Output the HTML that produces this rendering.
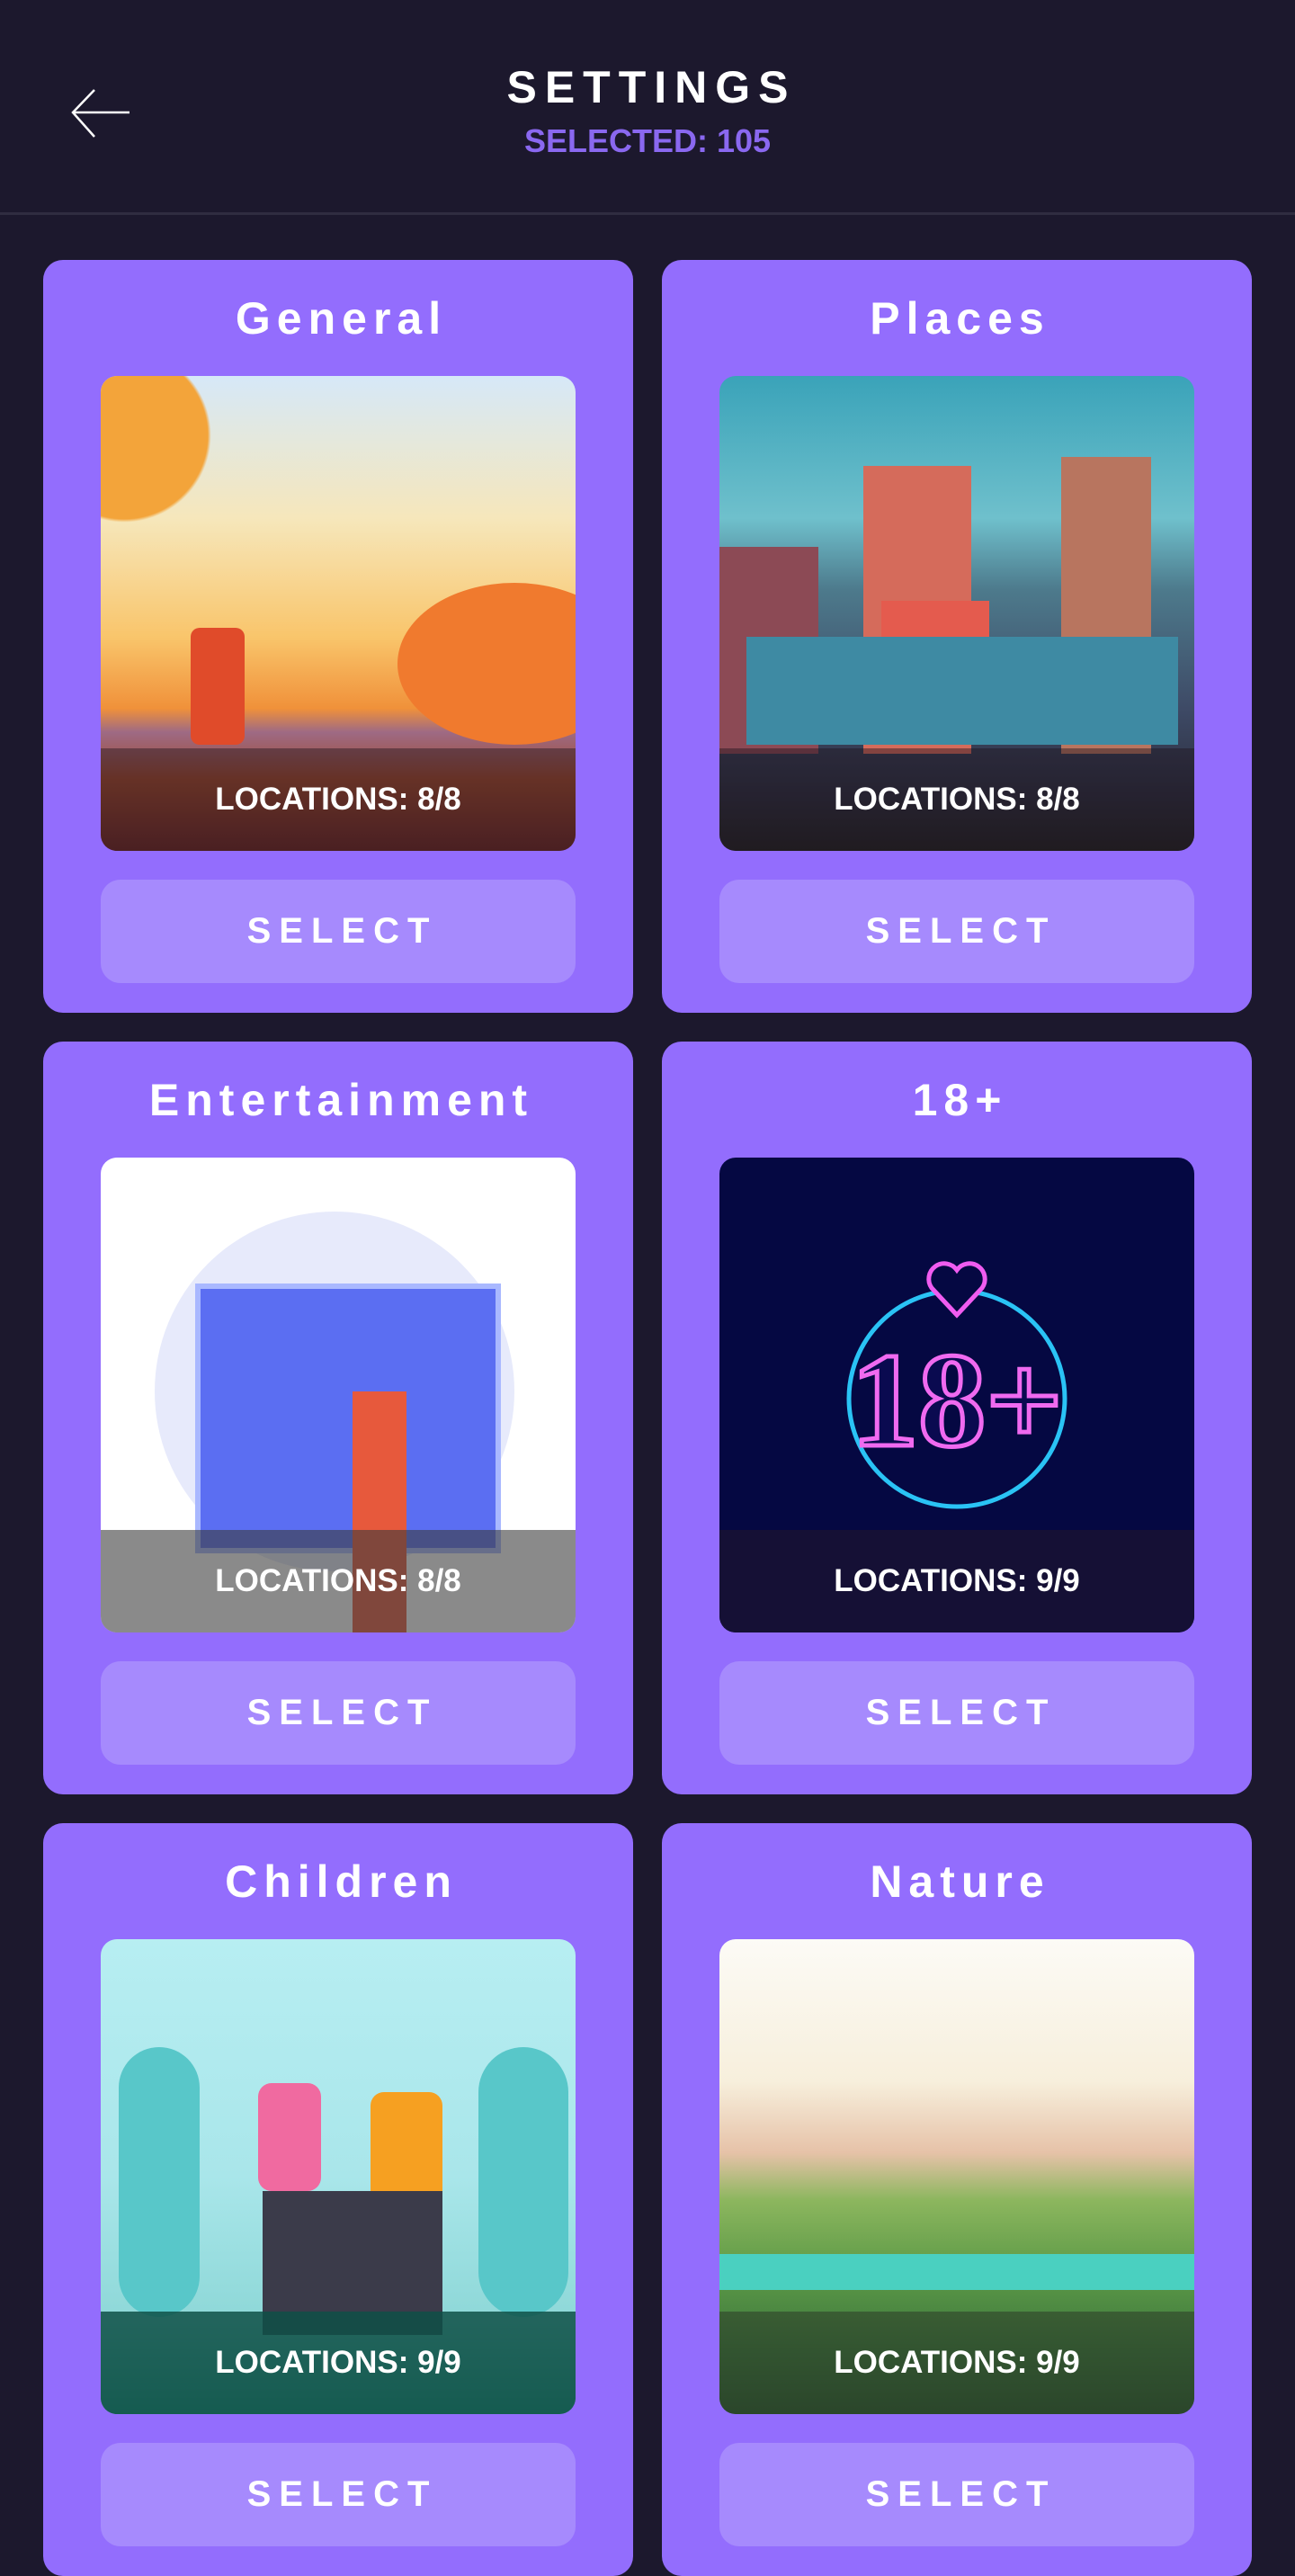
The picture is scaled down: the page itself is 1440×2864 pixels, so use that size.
<!DOCTYPE html>
<html><head><meta charset="utf-8"><style>
*{margin:0;padding:0;box-sizing:border-box}
body{width:1440px;height:2816px;background:#1c182d;overflow:hidden;font-family:"Liberation Sans",sans-serif;position:relative}
.hdr{position:absolute;left:0;top:0;width:1440px;height:239px;border-bottom:3px solid #2f2c40}
.t1{position:absolute;top:68px;width:1440px;text-align:center;color:#fff;font-size:50px;font-weight:bold;letter-spacing:9px;padding-left:9px}
.t2{position:absolute;top:136px;width:1440px;text-align:center;color:#8a68f0;font-size:36px;font-weight:bold}
.card{position:absolute;width:656px;height:837px;background:#936dfd;border-radius:22px}
.ct{position:absolute;top:36px;width:100%;text-align:center;color:#fff;font-size:50px;font-weight:bold;letter-spacing:7px;padding-left:7px}
.img{position:absolute;left:64px;top:129px;width:528px;height:528px;border-radius:18px;overflow:hidden}
.ov{position:absolute;left:0;bottom:0;width:100%;height:114px;background:rgba(30,20,30,.45);color:#fff;font-size:35px;font-weight:bold;text-align:center;line-height:114px}
.btn{position:absolute;left:64px;top:689px;width:528px;height:115px;border-radius:22px;background:#a68afd;color:#fff;font-size:40px;font-weight:bold;letter-spacing:9px;text-align:center;line-height:115px;padding-left:9px}
</style></head><body>
<div class="hdr">
<svg style="position:absolute;left:76px;top:96px" width="72" height="60" viewBox="0 0 72 60"><path d="M5 29H68M29 4L5 29L29 56" stroke="#fff" stroke-width="2.5" fill="none"/></svg>
<div class="t1">SETTINGS</div><div class="t2">SELECTED: 105</div>
</div>

<div class="card" style="left:48px;top:289px"><div class="ct">General</div>
<div class="img" style="background:linear-gradient(#d6e8f8 0%,#f6e7bb 30%,#f9c56b 55%,#f0913a 70%,#9e6a84 75%,#a04a2c 85%,#6e2a26 100%)">
<div style="position:absolute;left:0;top:0;width:130px;height:220px;background:radial-gradient(circle at 20% 30%,#f3a43a 0 50%,transparent 52%)"></div>
<div style="position:absolute;left:330px;top:230px;width:260px;height:180px;border-radius:50%;background:#f07a2e"></div>
<div style="position:absolute;left:100px;top:280px;width:60px;height:130px;background:#e04b2a;border-radius:10px"></div>
<div class="ov">LOCATIONS: 8/8</div></div>
<div class="btn">SELECT</div></div>

<div class="card" style="left:736px;top:289px"><div class="ct">Places</div>
<div class="img" style="background:linear-gradient(#3aa3b9 0%,#6fc0cc 30%,#4d7a8c 45%,#3e4a66 70%,#2c2f3f 88%,#222 100%)">
<div style="position:absolute;left:160px;top:100px;width:120px;height:320px;background:#d56b5b"></div>
<div style="position:absolute;left:0;top:190px;width:110px;height:230px;background:#8c4a55"></div>
<div style="position:absolute;left:380px;top:90px;width:100px;height:330px;background:#b8755f"></div>
<div style="position:absolute;left:30px;top:290px;width:480px;height:120px;background:#3e8aa3"></div>
<div style="position:absolute;left:180px;top:250px;width:120px;height:40px;background:#e45b4e"></div>
<div class="ov">LOCATIONS: 8/8</div></div>
<div class="btn">SELECT</div></div>

<div class="card" style="left:48px;top:1158px"><div class="ct">Entertainment</div>
<div class="img" style="background:#fff">
<div style="position:absolute;left:60px;top:60px;width:400px;height:400px;border-radius:50%;background:#e7eafb"></div>
<div style="position:absolute;left:105px;top:140px;width:340px;height:300px;background:#5b6ef2;border:6px solid #a9b8ff"></div>
<div style="position:absolute;left:280px;top:260px;width:60px;height:270px;background:#e7593c"></div>
<div class="ov" style="background:rgba(60,60,60,.6)">LOCATIONS: 8/8</div></div>
<div class="btn">SELECT</div></div>

<div class="card" style="left:736px;top:1158px"><div class="ct">18+</div>
<div class="img" style="background:#050842">
<svg width="528" height="528" style="position:absolute;left:0;top:0">
<circle cx="264" cy="268" r="120" fill="none" stroke="#2ac3f5" stroke-width="5"/>
<path d="M264 175l-28-30a16 16 0 0 1 28-20a16 16 0 0 1 28 20z" fill="#050842" stroke="#f05cf0" stroke-width="5"/>
<text x="264" y="320" text-anchor="middle" font-family="Liberation Serif" font-weight="bold" font-size="150" fill="#0a0a50" stroke="#f06af0" stroke-width="5">18+</text>
</svg>
<div class="ov" style="background:#151035">LOCATIONS: 9/9</div></div>
<div class="btn">SELECT</div></div>

<div class="card" style="left:48px;top:2027px"><div class="ct">Children</div>
<div class="img" style="background:linear-gradient(#b7eef2 0%,#a9e6ea 50%,#8ed8d8 80%,#3a9a88 100%)">
<div style="position:absolute;left:20px;top:120px;width:90px;height:300px;border-radius:45px;background:#58c7c9"></div>
<div style="position:absolute;left:420px;top:120px;width:100px;height:300px;border-radius:50px;background:#58c7c9"></div>
<div style="position:absolute;left:175px;top:160px;width:70px;height:120px;background:#f06aa0;border-radius:15px"></div>
<div style="position:absolute;left:300px;top:170px;width:80px;height:130px;background:#f6a021;border-radius:15px"></div>
<div style="position:absolute;left:180px;top:280px;width:200px;height:160px;background:#3b3b4a"></div>
<div class="ov" style="background:rgba(15,80,70,.85)">LOCATIONS: 9/9</div></div>
<div class="btn">SELECT</div></div>

<div class="card" style="left:736px;top:2027px"><div class="ct">Nature</div>
<div class="img" style="background:linear-gradient(#fcfbf6 0%,#f7efdc 30%,#e6c2a8 45%,#8cb65e 55%,#5d9a47 70%,#3f7a3e 85%,#2e5a32 100%)">
<div style="position:absolute;left:0;top:350px;width:528px;height:40px;background:#4ad0c0"></div>
<div class="ov" style="background:rgba(40,50,35,.5)">LOCATIONS: 9/9</div></div>
<div class="btn">SELECT</div></div>
</body></html>
